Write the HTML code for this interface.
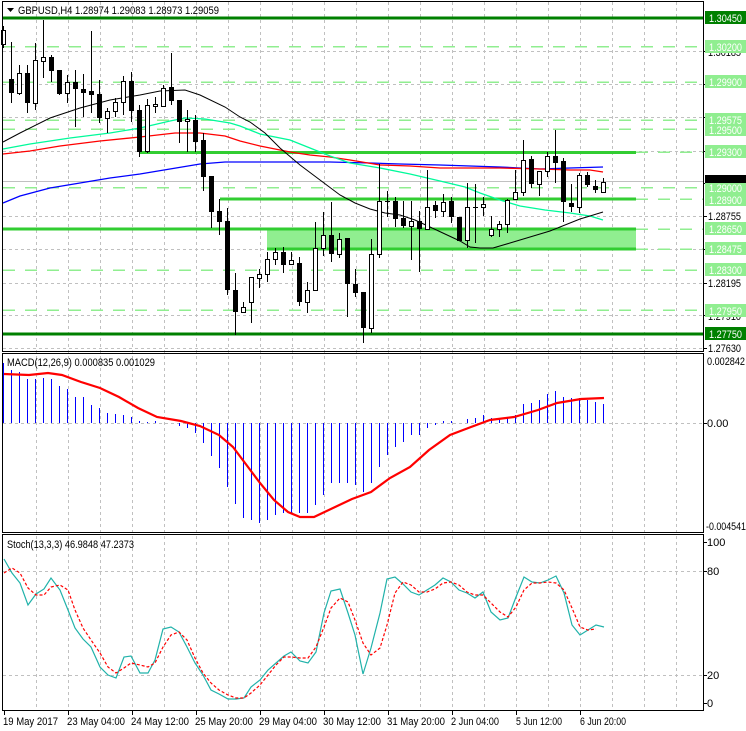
<!DOCTYPE html>
<html><head><meta charset="utf-8"><style>
html,body{margin:0;padding:0;background:#fff;}
svg{display:block;font-family:"Liberation Sans",sans-serif;font-size:11px;}
</style></head><body>
<svg width="746" height="731" viewBox="0 0 746 731" xmlns="http://www.w3.org/2000/svg" shape-rendering="crispEdges">
<rect width="746" height="731" fill="#fff"/>
<g stroke="#c0c0c0" stroke-dasharray="3,3">
<path d="M36.5 2V711M68.5 2V711M100.5 2V711M132.5 2V711M164.5 2V711M196.5 2V711M228.5 2V711M260.5 2V711M292.5 2V711M324.5 2V711M356.5 2V711M388.5 2V711M420.5 2V711M452.5 2V711M484.5 2V711M516.5 2V711M548.5 2V711M580.5 2V711M612.5 2V711M644.5 2V711M676.5 2V711"/>
<path d="M3 51.5H703M3 84.5H703M3 117.5H703M3 151.5H703M3 216.5H703M3 249.5H703M3 283.5H703M3 315.5H703M3 348.5H703M3 423.5H703M3 571.5H703M3 675.5H703"/>
</g>
<g stroke="#90ee90" stroke-width="1.5" stroke-dasharray="12,10">
<path d="M3 46.5H703M3 82H703M3 120H703M3 129H703M3 187.5H703M3 270H703M3 310H703M636 152H703M636 199H703M636 229H703M636 249H703"/>
</g>
<path d="M3 181.5H703" stroke="#c0c0c0"/>
<rect x="267" y="229" width="369" height="20" fill="#90ee90"/>
<g stroke="#32cd32" stroke-width="3">
<path d="M140 152.5H636M220 199H636M3 229H636M267 249H636"/>
</g>
<g stroke="#008000" stroke-width="3"><path d="M3 18H703M3 334H703"/></g>
<g fill="none" stroke-width="1" shape-rendering="auto">
<polyline stroke="#0000ff" stroke-width="1.3" points="3,203 20,196 50,188 80,183 110,178 140,174 170,169 200,164 225,162 280,162 330,162 370,163 400,164 440,165 470,166 500,167 540,169 570,168 603,167"/>
<polyline stroke="#ff0000" stroke-width="1.3" points="3,154 30,151 60,146 100,141 140,137 175,133 200,133 225,136 240,141 260,146 290,152 310,155 330,157 350,160 380,165 410,166 440,168 470,168 500,168 540,169 570,170 590,170 603,172"/>
<polyline stroke="#00fa9a" stroke-width="1.3" points="3,149 30,144 70,138 110,133 140,128 170,121 185,118 205,119 230,123 240,126 260,134 290,140 310,148 330,156 350,163 380,168 410,174 440,181 465,187 480,193 500,200 520,206 545,210 570,213 590,216 603,220"/>
<polyline stroke="#000" points="3,142 20,133 50,118 80,108 110,100 140,95 160,91 185,90 200,95 225,107 240,117 250,122 265,133 280,148 300,165 320,180 340,195 355,203 370,209 385,213 400,215 415,220 430,227 445,234 460,241 470,247 480,248 493,248 510,243 530,237 550,231 565,225 580,219 590,216 603,212"/>
</g>
<g stroke="#000" stroke-width="1">
<path d="M3.5 26V48M11.5 42V103M19.5 65V95M27.5 65V113M35.5 43V110M43.5 20V78M51.5 55V82M59.5 70V95M67.5 75V103M75.5 70V127M83.5 74V117M91.5 31V113M99.5 80V123M107.5 108V133M115.5 98V117M123.5 76V115M131.5 72V122M139.5 105V157M147.5 99V153M155.5 97V113M163.5 85V106M171.5 53V105M179.5 100V143M187.5 110V152M195.5 115V152M203.5 133V191M211.5 176V228M219.5 199V235M227.5 208V295M235.5 273V335M243.5 302V313M251.5 277V323M259.5 269V288M267.5 252V282M275.5 248V265M283.5 247V273M291.5 252V265M299.5 257V306M307.5 282V313M315.5 222V290M323.5 212V256M331.5 202V262M339.5 233V258M347.5 238V317M355.5 269V297M363.5 292V343M371.5 239V333M379.5 164V258M387.5 191V217M395.5 197V227M403.5 201V228M411.5 201V260M419.5 211V272M427.5 170V229M435.5 201V218M443.5 194V217M451.5 197V223M459.5 217V241M467.5 183V248M475.5 184V243M483.5 197V216M491.5 216V237M499.5 221V237M507.5 199V233M515.5 170V199M523.5 140V196M531.5 156V188M539.5 171V196M547.5 152V177M555.5 130V183M563.5 158V222M571.5 184V212M579.5 173V213M587.5 172V187M595.5 180V193M603.5 178V192M385 201.5H390M473 207.5H478"/>
</g>
<g fill="#000">
<rect x="9" y="79" width="5" height="14"/><rect x="25" y="73" width="5" height="30"/><rect x="49" y="57" width="5" height="14"/><rect x="57" y="70" width="5" height="24"/><rect x="73" y="82" width="5" height="7"/><rect x="81" y="89" width="5" height="4"/><rect x="89" y="91" width="5" height="4"/><rect x="97" y="94" width="5" height="24"/><rect x="129" y="81" width="5" height="30"/><rect x="137" y="110" width="5" height="42"/><rect x="169" y="87" width="5" height="14"/><rect x="177" y="100" width="5" height="22"/><rect x="193" y="120" width="5" height="22"/><rect x="201" y="140" width="5" height="37"/><rect x="209" y="176" width="5" height="36"/><rect x="217" y="211" width="5" height="11"/><rect x="225" y="221" width="5" height="69"/><rect x="233" y="290" width="5" height="22"/><rect x="281" y="252" width="5" height="13"/><rect x="297" y="263" width="5" height="39"/><rect x="329" y="235" width="5" height="19"/><rect x="345" y="238" width="5" height="46"/><rect x="353" y="284" width="5" height="9"/><rect x="361" y="292" width="5" height="36"/><rect x="393" y="201" width="5" height="18"/><rect x="401" y="218" width="5" height="8"/><rect x="417" y="221" width="5" height="8"/><rect x="433" y="205" width="5" height="6"/><rect x="449" y="201" width="5" height="16"/><rect x="457" y="217" width="5" height="24"/><rect x="529" y="159" width="5" height="25"/><rect x="553" y="156" width="5" height="7"/><rect x="561" y="161" width="5" height="41"/><rect x="569" y="203" width="5" height="4"/><rect x="585" y="175" width="5" height="10"/><rect x="593" y="186" width="5" height="4"/>
</g>
<g fill="#fff" stroke="#000">
<rect x="1.5" y="30.5" width="4" height="14"/><rect x="17.5" y="73.5" width="4" height="20"/><rect x="33.5" y="60.5" width="4" height="43"/><rect x="41.5" y="57.5" width="4" height="4"/><rect x="65.5" y="82.5" width="4" height="11"/><rect x="105.5" y="111.5" width="4" height="7"/><rect x="113.5" y="102.5" width="4" height="9"/><rect x="121.5" y="81.5" width="4" height="21"/><rect x="145.5" y="105.5" width="4" height="46"/><rect x="153.5" y="104.5" width="4" height="2"/><rect x="161.5" y="88.5" width="4" height="18"/><rect x="185.5" y="119.5" width="4" height="2"/><rect x="241.5" y="307.5" width="4" height="5"/><rect x="249.5" y="277.5" width="4" height="25"/><rect x="257.5" y="274.5" width="4" height="4"/><rect x="265.5" y="259.5" width="4" height="15"/><rect x="273.5" y="252.5" width="4" height="7"/><rect x="289.5" y="260.5" width="4" height="4"/><rect x="305.5" y="290.5" width="4" height="12"/><rect x="313.5" y="248.5" width="4" height="42"/><rect x="321.5" y="235.5" width="4" height="13"/><rect x="337.5" y="239.5" width="4" height="15"/><rect x="369.5" y="254.5" width="4" height="74"/><rect x="377.5" y="201.5" width="4" height="53"/><rect x="409.5" y="221.5" width="4" height="5"/><rect x="425.5" y="207.5" width="4" height="22"/><rect x="441.5" y="202.5" width="4" height="9"/><rect x="465.5" y="207.5" width="4" height="33"/><rect x="481.5" y="204.5" width="4" height="3"/><rect x="489.5" y="229.5" width="4" height="6"/><rect x="497.5" y="224.5" width="4" height="5"/><rect x="505.5" y="200.5" width="4" height="24"/><rect x="513.5" y="192.5" width="4" height="7"/><rect x="521.5" y="160.5" width="4" height="32"/><rect x="537.5" y="171.5" width="4" height="13"/><rect x="545.5" y="156.5" width="4" height="15"/><rect x="577.5" y="175.5" width="4" height="32"/><rect x="601.5" y="182.5" width="4" height="10"/>
</g>
<g stroke="#0000ff">
<path d="M3.5 423V363M11.5 423V370M19.5 423V372M27.5 423V379M35.5 423V379M43.5 423V378M51.5 423V379M59.5 423V386M67.5 423V389M75.5 423V397M83.5 423V397M91.5 423V405M99.5 423V408M107.5 423V413M115.5 423V414M123.5 423V415M131.5 423V417M139.5 423V421M147.5 423V422M155.5 423V421M179.5 423V426M187.5 423V428M195.5 423V433M203.5 423V443M211.5 423V456M219.5 423V468M227.5 423V487M235.5 423V504M243.5 423V518M251.5 423V520M259.5 423V523M267.5 423V520M275.5 423V515M283.5 423V513M291.5 423V513M299.5 423V513M307.5 423V513M315.5 423V505M323.5 423V495M331.5 423V483M339.5 423V483M347.5 423V483M355.5 423V485M363.5 423V492M371.5 423V483M379.5 423V467M387.5 423V455M395.5 423V447M403.5 423V442M411.5 423V435M419.5 423V435M427.5 423V428M435.5 423V425M443.5 423V421M451.5 423V421M467.5 423V419M475.5 423V418M483.5 423V415M491.5 423V418M499.5 423V418M507.5 423V417M515.5 423V415M523.5 423V404M531.5 423V403M539.5 423V400M547.5 423V394M555.5 423V391M563.5 423V397M571.5 423V398M579.5 423V398M587.5 423V400M595.5 423V402M603.5 423V404"/>
</g>
<polyline shape-rendering="auto" fill="none" stroke="#ff0000" stroke-width="2.2" points="4,374 29,375 48,373 62,375 81,382 100,388 119,397 138,408 157,417 181,421 200,426 219,435 233,447 248,467 260,483 274,500 288,512 300,517 314,517 333,508 352,499 371,492 390,478 410,467 429,450 450,435 471,427 490,420 514,417 538,410 557,403 581,399 604,398"/>
<polyline shape-rendering="auto" fill="none" stroke="#20b2aa" stroke-width="1.2" points="4,559 12,573 20,583 28,605 36,594 44,589 51,578 60,590 68,610 75,628 83,639 91,647 100,667 108,675 116,678 124,657 131,656 140,673 148,673 155,660 163,629 171,627 179,632 187,647 195,663 203,675 211,690 219,694 228,699 236,699 244,698 251,687 260,680 268,670 276,663 284,656 291,652 300,661 308,663 316,652 324,613 331,591 340,589 348,613 355,635 363,674 371,648 380,613 387,579 395,577 403,584 411,592 419,595 427,590 435,585 443,578 451,582 459,590 467,593 475,598 483,592 491,612 500,620 508,618 516,597 524,577 532,582 540,583 548,580 556,576 564,593 572,625 580,635 588,630 596,625 604,627"/>
<polyline shape-rendering="auto" fill="none" stroke="#ff0000" stroke-width="1.2" stroke-dasharray="3,2" points="4,573 12,568 20,573 28,588 36,595 44,595 51,587 60,585 68,590 75,610 83,628 91,640 100,653 108,667 116,673 124,668 131,663 140,665 148,667 155,663 163,647 171,635 179,632 187,640 195,658 203,673 211,683 219,690 228,695 236,698 244,698 251,693 260,685 268,675 276,665 284,657 291,657 300,658 308,658 316,647 324,627 331,608 340,598 348,602 355,620 363,643 371,655 380,648 387,625 395,593 403,582 411,585 419,592 427,592 435,589 443,583 451,582 459,585 467,592 475,595 483,595 491,603 500,612 508,617 516,607 524,590 532,583 540,583 548,582 556,583 564,590 572,608 580,627 588,630 596,629"/>
<g fill="none" stroke="#000">
<rect x="2.5" y="1.5" width="701" height="350"/>
<rect x="2.5" y="353.5" width="701" height="179"/>
<rect x="2.5" y="534.5" width="701" height="176"/>
</g>
<g stroke="#000"><path d="M703 51.5h4M703 84.5h4M703 117.5h4M703 151.5h4M703 183.5h4M703 216.5h4M703 249.5h4M703 283.5h4M703 315.5h4M703 348.5h4M703 423.5h4M703 542.5h4M703 571.5h4M703 675.5h4M703 703.5h4M4.5 711v4M68.5 711v4M132.5 711v4M196.5 711v4M260.5 711v4M324.5 711v4M388.5 711v4M452.5 711v4M516.5 711v4M580.5 711v4"/></g>
<g fill="#000" lengthAdjust="spacingAndGlyphs">
<text x="708" y="56" textLength="33" lengthAdjust="spacingAndGlyphs">1.30185</text>
<text x="708" y="220" textLength="33" lengthAdjust="spacingAndGlyphs">1.28755</text>
<text x="708" y="287" textLength="33" lengthAdjust="spacingAndGlyphs">1.28195</text>
<text x="708" y="320" textLength="33" lengthAdjust="spacingAndGlyphs">1.27910</text>
<text x="708" y="352" textLength="33" lengthAdjust="spacingAndGlyphs">1.27630</text>
<text x="707" y="365" textLength="38" lengthAdjust="spacingAndGlyphs">0.002842</text>
<text x="707" y="427">0.00</text>
<text x="706" y="530" textLength="40" lengthAdjust="spacingAndGlyphs">-0.004541</text>
<text x="707" y="546">100</text>
<text x="707" y="575">80</text>
<text x="707" y="679">20</text>
<text x="707" y="707">0</text>
</g>
<g fill="#90ee90">
<rect x="705" y="40" width="41" height="13"/><rect x="705" y="75" width="41" height="13"/><rect x="705" y="113" width="41" height="13"/><rect x="705" y="123" width="41" height="13"/><rect x="705" y="145" width="41" height="13"/><rect x="705" y="181" width="41" height="13"/><rect x="705" y="193" width="41" height="13"/><rect x="705" y="222" width="41" height="13"/><rect x="705" y="242" width="41" height="13"/><rect x="705" y="263" width="41" height="13"/><rect x="705" y="304" width="41" height="13"/>
</g>
<rect x="705" y="11" width="41" height="13" fill="#008000"/>
<rect x="705" y="327" width="41" height="13" fill="#008000"/>
<rect x="705" y="175" width="41" height="8" fill="#000"/>
<g fill="#fff">
<text x="709" y="22" textLength="33" lengthAdjust="spacingAndGlyphs">1.30450</text>
<text x="709" y="51" textLength="33" lengthAdjust="spacingAndGlyphs">1.30200</text>
<text x="709" y="86" textLength="33" lengthAdjust="spacingAndGlyphs">1.29900</text>
<text x="709" y="124" textLength="33" lengthAdjust="spacingAndGlyphs">1.29575</text>
<text x="709" y="134" textLength="33" lengthAdjust="spacingAndGlyphs">1.29500</text>
<text x="709" y="156" textLength="33" lengthAdjust="spacingAndGlyphs">1.29300</text>
<text x="709" y="192" textLength="33" lengthAdjust="spacingAndGlyphs">1.29000</text>
<text x="709" y="204" textLength="33" lengthAdjust="spacingAndGlyphs">1.28900</text>
<text x="709" y="233" textLength="33" lengthAdjust="spacingAndGlyphs">1.28650</text>
<text x="709" y="253" textLength="33" lengthAdjust="spacingAndGlyphs">1.28475</text>
<text x="709" y="274" textLength="33" lengthAdjust="spacingAndGlyphs">1.28300</text>
<text x="709" y="315" textLength="33" lengthAdjust="spacingAndGlyphs">1.27950</text>
<text x="709" y="338" textLength="33" lengthAdjust="spacingAndGlyphs">1.27750</text>
</g>
<path d="M7 8h7l-3.5 4z" fill="#000" shape-rendering="auto"/>
<text x="18" y="14" fill="#000" textLength="201" lengthAdjust="spacingAndGlyphs">GBPUSD,H4  1.28974 1.29083 1.28973 1.29059</text>
<text x="7" y="366" fill="#000" textLength="148" lengthAdjust="spacingAndGlyphs">MACD(12,26,9) 0.000835 0.001029</text>
<text x="7" y="548" fill="#000" textLength="127" lengthAdjust="spacingAndGlyphs">Stoch(13,3,3) 46.9848 47.2373</text>
<g fill="#000">
<text x="3" y="725" textLength="55" lengthAdjust="spacingAndGlyphs">19 May 2017</text>
<text x="67" y="725" textLength="58" lengthAdjust="spacingAndGlyphs">23 May 04:00</text>
<text x="131" y="725" textLength="58" lengthAdjust="spacingAndGlyphs">24 May 12:00</text>
<text x="195" y="725" textLength="58" lengthAdjust="spacingAndGlyphs">25 May 20:00</text>
<text x="259" y="725" textLength="58" lengthAdjust="spacingAndGlyphs">29 May 04:00</text>
<text x="323" y="725" textLength="58" lengthAdjust="spacingAndGlyphs">30 May 12:00</text>
<text x="387" y="725" textLength="58" lengthAdjust="spacingAndGlyphs">31 May 20:00</text>
<text x="451" y="725" textLength="48" lengthAdjust="spacingAndGlyphs">2 Jun 04:00</text>
<text x="516" y="725" textLength="46" lengthAdjust="spacingAndGlyphs">5 Jun 12:00</text>
<text x="580" y="725" textLength="46" lengthAdjust="spacingAndGlyphs">6 Jun 20:00</text>
</g>
</svg>
</body></html>
